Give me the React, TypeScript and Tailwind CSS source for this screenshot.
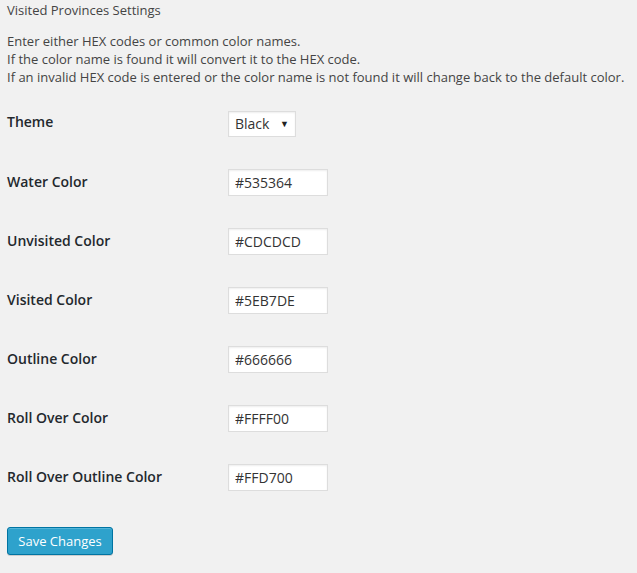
import { useState } from 'react'

const colorFields = [
  { id: 'water', label: 'Water Color', value: '#535364' },
  { id: 'unvisited', label: 'Unvisited Color', value: '#CDCDCD' },
  { id: 'visited', label: 'Visited Color', value: '#5EB7DE' },
  { id: 'outline', label: 'Outline Color', value: '#666666' },
  { id: 'rollover', label: 'Roll Over Color', value: '#FFFF00' },
  { id: 'rollover-outline', label: 'Roll Over Outline Color', value: '#FFD700' },
]

export default function App() {
  const [theme, setTheme] = useState('Black')
  const [values, setValues] = useState<Record<string, string>>(
    Object.fromEntries(colorFields.map((f) => [f.id, f.value]))
  )

  return (
    <div className="min-h-[573px] w-full bg-[#f1f1f1] px-[7px] pt-px text-[13px] leading-[18px] text-[#444] font-['Open_Sans',sans-serif]">
      <h2 className="text-[13px] font-normal leading-[18px] text-[#444]">Visited Provinces Settings</h2>

      <div className="mt-[13px]">
        <p>Enter either HEX codes or common color names.</p>
        <p>If the color name is found it will convert it to the HEX code.</p>
        <p>If an invalid HEX code is entered or the color name is not found it will change back to the default color.</p>
      </div>

      <form className="mt-[8px]" onSubmit={(e) => e.preventDefault()}>
        <div className="flex h-[59px] items-center">
          <label htmlFor="theme" className="w-[221px] pb-[3px] text-[14px] font-semibold text-[#23282d]">
            Theme
          </label>
          <div className="relative">
            <select
              id="theme"
              value={theme}
              onChange={(e) => setTheme(e.target.value)}
              className="h-[26px] w-[68px] appearance-none border border-[#ddd] bg-white pl-[6px] text-[14px] text-[#333] shadow-[inset_0_1px_2px_rgba(0,0,0,0.07)] outline-none"
            >
              <option>Black</option>
              <option>White</option>
            </select>
            <span className="pointer-events-none absolute right-[7px] top-[7px] text-[9px] leading-[12px] text-[#222]">▼</span>
          </div>
        </div>

        {colorFields.map((f) => (
          <div key={f.id} className="flex h-[59px] items-center">
            <label htmlFor={f.id} className="w-[221px] pb-[2px] text-[14px] font-semibold text-[#23282d]">
              {f.label}
            </label>
            <input
              id={f.id}
              type="text"
              value={values[f.id]}
              onChange={(e) => setValues({ ...values, [f.id]: e.target.value })}
              className="h-[27px] w-[100px] border border-[#ddd] bg-white px-[6px] text-[14px] text-[#333] shadow-[inset_0_1px_2px_rgba(0,0,0,0.07)] outline-none"
            />
          </div>
        ))}

        <button
          type="submit"
          className="mt-[20px] h-[28px] w-[106px] rounded-[3px] border border-[#0074a2] bg-[#2ea2cc] text-[13px] text-white shadow-[inset_0_1px_0_rgba(120,200,230,0.5),0_1px_0_rgba(0,0,0,0.15)]"
        >
          Save Changes
        </button>
      </form>
    </div>
  )
}
